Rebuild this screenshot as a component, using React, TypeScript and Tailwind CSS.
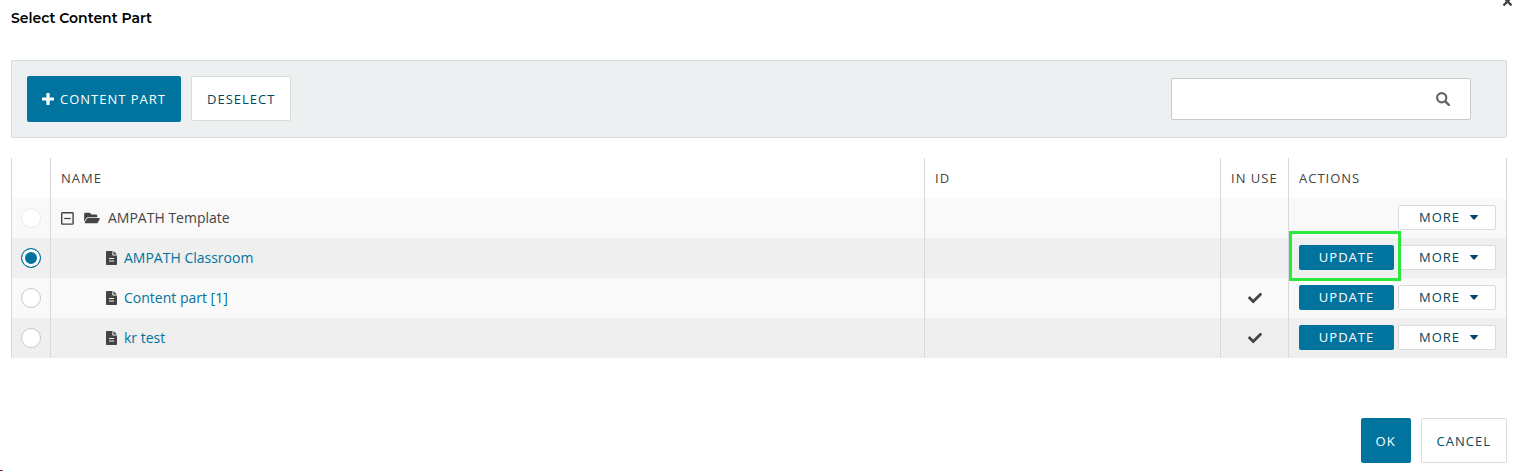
import { useState } from 'react';

type Part = { name: string; inUse: boolean };

const parts: Part[] = [
  { name: 'AMPATH Classroom', inUse: false },
  { name: 'Content part [1]', inUse: true },
  { name: 'kr test', inUse: true },
];

const primary = 'rounded-[2px] bg-[#00749e] text-[13px] leading-5 tracking-[1px] text-white uppercase';
const secondary =
  'rounded-[2px] border border-[#dadcdc] bg-white text-[13px] leading-5 tracking-[1px] text-[#004960] uppercase';
const cell = 'h-10 border-l border-[#d9d9d9] p-0 last:border-r';
const heading = 'text-left font-normal tracking-[1px] text-[13px]';

function PlusIcon() {
  return (
    <svg viewBox="0 0 12 12" className="size-3" fill="currentColor" aria-hidden="true">
      <path d="M5 0h2q.6 0 .6.6v3.8h3.8q.6 0 .6.6v2q0 .6-.6.6H7.600v3.800q0 .6-.6.600H5q-.6 0-.6-.6V7.600H.6Q0 7.600 0 7V5q0-.6.600-.6h3.800V.6Q4.400 0 5 0z" />
    </svg>
  );
}

function SearchIcon() {
  return (
    <svg viewBox="0 0 14 14" className="size-3.5" fill="none" stroke="currentColor" aria-hidden="true">
      <circle cx="5.700" cy="5.700" r="4.600" strokeWidth="2.200" />
      <path d="M9.300 9.300l3.500 3.500" strokeWidth="2.500" strokeLinecap="round" />
    </svg>
  );
}

function FolderIcon() {
  return (
    <svg viewBox="0 0 576 512" className="h-3.5 w-4" fill="currentColor" aria-hidden="true">
      <path d="M572.694 292.093L500.270 416.248A63.997 63.997 0 0 1 444.989 448H45.025c-18.523 0-30.064-20.093-20.731-36.093l72.424-124.155A64 64 0 0 1 152 256h399.964c18.523 0 30.064 20.093 20.730 36.093zM152 224h328v-48c0-26.510-21.490-48-48-48H272l-64-64H48C21.490 64 0 85.490 0 112v278.046l69.077-118.418C86.214 242.250 117.989 224 152 224z" />
    </svg>
  );
}

function FileIcon() {
  return (
    <svg viewBox="0 0 11 14" className="h-3.5 w-[11px]" fill="currentColor" aria-hidden="true">
      <path
        fillRule="evenodd"
        d="M.7 0H6.400v3.900q0 .7.700.7H11v8.700q0 .7-.7.700H.7Q0 14 0 13.300V.7Q0 0 .7 0zM3 7.100v.8h5V7.100zM3 9.600v.8h5v-.8z"
      />
      <path d="M7.500 0L11 3.500H7.500z" />
    </svg>
  );
}

function CheckIcon() {
  return (
    <svg viewBox="0 0 512 512" className="size-3.5" fill="currentColor" aria-hidden="true">
      <path d="M173.898 439.404l-166.400-166.400c-9.997-9.997-9.997-26.206 0-36.204l36.203-36.204c9.997-9.998 26.207-9.998 36.204 0L192 312.690 432.095 72.596c9.997-9.997 26.207-9.997 36.204 0l36.203 36.204c9.997 9.997 9.997 26.206 0 36.204l-294.400 294.401c-9.998 9.997-26.207 9.997-36.204-.001z" />
    </svg>
  );
}

function MoreButton() {
  return (
    <button
      type="button"
      className={`${secondary} flex h-[25px] w-[98px] items-center gap-2.5 pl-5`}
    >
      More
      <svg viewBox="0 0 8 5" className="h-[5px] w-2" fill="currentColor" aria-hidden="true">
        <path d="M.5 0h7q.8.200.300.800L4.600 4.500q-.6.600-1.200 0L.2.800Q-.2.200.5 0z" />
      </svg>
    </button>
  );
}

function Radio({ label, checked, disabled, onChange }: {
  label: string;
  checked?: boolean;
  disabled?: boolean;
  onChange?: () => void;
}) {
  return (
    <input
      type="radio"
      name="content-part"
      aria-label={label}
      checked={!!checked}
      disabled={disabled}
      onChange={onChange}
      className="mx-auto block size-5 appearance-none rounded-full border border-[#c9c9c9] bg-white checked:border-[#00749e] checked:bg-[#00749e] checked:shadow-[inset_0_0_0_3px_white] disabled:border-[#ececec]"
    />
  );
}

export default function App() {
  const [selected, setSelected] = useState<number | null>(0);
  const [open, setOpen] = useState(true);

  return (
    <main className="relative overflow-hidden bg-white pr-1.5 pb-2 pl-[11px] font-['Open_Sans',sans-serif] text-sm text-[#444]">
      <button type="button" aria-label="Close" className="absolute -top-1 right-0 p-0 text-[#444]">
        <svg viewBox="0 0 11 11" className="size-[11px]" stroke="currentColor" strokeWidth="2.500" aria-hidden="true">
          <path d="M1.500 1l8 8.500M9.500 1l-8 8.500" />
        </svg>
      </button>

      <h1 className="pt-2 font-[Montserrat,Inter,sans-serif] text-sm leading-5 font-semibold text-black">
        Select Content Part
      </h1>

      <div className="mt-8 flex h-[78px] items-center justify-between rounded-[2px] border border-[#d9dcdc] bg-[#ecf0f1] pr-[35px] pl-[15px]">
        <div className="flex gap-2.5">
          <button type="button" className={`${primary} flex h-[46px] items-center gap-1.5 px-[15px]`}>
            <PlusIcon />
            Content Part
          </button>
          <button type="button" onClick={() => setSelected(null)} className={`${secondary} h-[45px] px-[15px]`}>
            Deselect
          </button>
        </div>
        <div className="flex h-[42px] w-[300px] items-center rounded-[2px] border border-[#c9cbcb] bg-white pr-5">
          <input type="text" aria-label="Search" className="h-full min-w-0 flex-1 px-3 outline-none" />
          <button type="button" aria-label="Run search" className="text-[#666]">
            <SearchIcon />
          </button>
        </div>
      </div>

      <table className="mt-5 w-full table-fixed border-separate border-spacing-0">
        <colgroup>
          <col className="w-[39px]" />
          <col />
          <col className="w-[296px]" />
          <col className="w-[68px]" />
          <col className="w-[219px]" />
        </colgroup>
        <thead>
          <tr>
            <td className={cell} />
            <th scope="col" className={`${cell} ${heading}`}><span className="pl-2.5">NAME</span></th>
            <th scope="col" className={`${cell} ${heading}`}><span className="pl-2.5">ID</span></th>
            <th scope="col" className={`${cell} ${heading} whitespace-nowrap`}><span className="pl-2.5">IN USE</span></th>
            <th scope="col" className={`${cell} ${heading}`}><span className="pl-2.5">ACTIONS</span></th>
          </tr>
        </thead>
        <tbody>
          <tr className="bg-[#f9f9f9]">
            <td className={cell}><Radio label="AMPATH Template" disabled /></td>
            <td className={cell}>
              <div className="flex items-center pl-2.5">
                <button type="button" aria-label="Toggle AMPATH Template" onClick={() => setOpen(!open)}>
                  <svg viewBox="0 0 13 13" className="size-[13px]" fill="none" stroke="currentColor" aria-hidden="true">
                    <rect x=".7" y=".7" width="11.400" height="11.400" rx=".7" strokeWidth="1.400" />
                    <path d={open ? 'M3.200 6.500h6.600' : 'M3.200 6.500h6.600M6.500 3.200v6.600'} strokeWidth="1.300" />
                  </svg>
                </button>
                <span className="ml-2.5"><FolderIcon /></span>
                <span className="ml-2">AMPATH Template</span>
              </div>
            </td>
            <td className={cell} />
            <td className={cell} />
            <td className={cell}>
              <div className="flex justify-end pr-2.5 pb-0.5"><MoreButton /></div>
            </td>
          </tr>
          {open && parts.map((part, i) => (
            <tr key={part.name} className="odd:bg-[#f9f9f9] even:bg-[#efefef]">
              <td className={cell}>
                <Radio label={part.name} checked={selected === i} onChange={() => setSelected(i)} />
              </td>
              <td className={cell}>
                <div className="flex items-center gap-[7px] pl-[55px]">
                  <FileIcon />
                  <a href="#part" className="text-[#00749e]">{part.name}</a>
                </div>
              </td>
              <td className={cell} />
              <td className={cell}>
                {part.inUse && <span className="flex justify-center" role="img" aria-label="In use"><CheckIcon /></span>}
              </td>
              <td className={cell}>
                <div className="flex justify-end gap-1 pr-2.5 pb-0.5">
                  <div className="relative">
                    <button type="button" className={`${primary} block h-[25px] w-[95px]`}>Update</button>
                    {i === 0 && (
                      <span className="pointer-events-none absolute -top-3.5 -right-[7px] -bottom-[11px] -left-2.5 z-10 border-[3px] border-[#2be83a]" />
                    )}
                  </div>
                  <MoreButton />
                </div>
              </td>
            </tr>
          ))}
        </tbody>
      </table>

      <div className="mt-[60px] flex justify-end gap-2.5">
        <button type="button" className={`${primary} h-[45px] w-[50px]`}>OK</button>
        <button type="button" className={`${secondary} h-[45px] px-[15px]`}>Cancel</button>
      </div>

      <svg viewBox="0 0 3 1" className="absolute bottom-0 left-0 h-px w-[3px]" aria-hidden="true">
        <path d="M0 0h1v1H0z" fill="#e00000" />
        <path d="M1 0h1v1H1z" fill="#0038d0" />
        <path d="M2 0h1v1H2z" fill="#008cc0" />
      </svg>
    </main>
  );
}
